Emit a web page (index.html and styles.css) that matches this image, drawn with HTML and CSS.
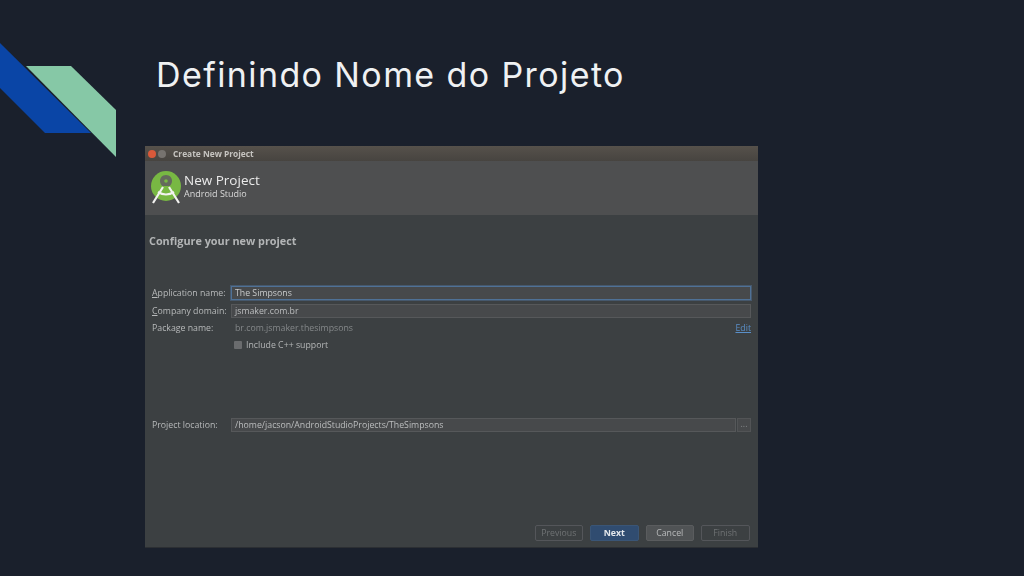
FILE: index.html
```html
<!DOCTYPE html>
<html lang="pt">
<head>
<meta charset="utf-8">
<title>Definindo Nome do Projeto</title>
<link rel="stylesheet" href="styles.css">
</head>
<body>
<main class="slide">
  <svg class="deco" width="120" height="160" viewBox="0 0 120 160" aria-hidden="true">
    <polygon points="0,43 91,133 45,133 0,88" fill="#0a45a6"/>
    <polygon points="26,66 71,66 116,110 116,157" fill="#86c8a6"/>
  </svg>
  <h1 class="title">Definindo Nome do Projeto</h1>
  <section class="dialog">
    <div class="titlebar">
      <span class="dot dot-close"></span>
      <span class="dot dot-min"></span>
      <span class="titlebar-text">Create New Project</span>
    </div>
    <header class="banner">
      <svg class="logo" width="32" height="34" viewBox="0 0 32 34" aria-hidden="true">
        <circle cx="16" cy="15" r="15" fill="#78b843"/>
        <path d="M16 4c-3.800 0-6 2.800-6 6 0 2.200 1 3.800 2.200 5h7.600c1.200-1.200 2.200-2.800 2.200-5C22 6.800 19.800 4 16 4z" fill="#646a5c"/>
        <circle cx="16" cy="10" r="1.800" fill="#78b843"/>
        <path d="M13 16L3 32M19 16L29 32M8 21Q16 26 24 21" stroke="#f2f2f0" stroke-width="2.200" fill="none"/>
      </svg>
      <div class="banner-text">
        <div class="banner-title">New Project</div>
        <div class="banner-sub">Android Studio</div>
      </div>
    </header>
    <div class="content">
      <h2 class="heading">Configure your new project</h2>
      <div class="form">
        <label class="label"><u>A</u>pplication name:</label>
        <div class="input input-focus">The Simpsons</div>
        <label class="label"><u>C</u>ompany domain:</label>
        <div class="input">jsmaker.com.br</div>
        <label class="label">Package name:</label>
        <div class="package"><span class="muted">br.com.jsmaker.thesimpsons</span><a class="edit">Edit</a></div>
        <span></span>
        <div class="check"><span class="box"></span><span>Include C++ support</span></div>
      </div>
      <div class="location">
        <label class="label">Project location:</label>
        <div class="input grow">/home/jacson/AndroidStudioProjects/TheSimpsons</div>
        <div class="browse">...</div>
      </div>
      <div class="buttons">
        <div class="btn btn-off">Previous</div>
        <div class="btn btn-primary">Next</div>
        <div class="btn">Cancel</div>
        <div class="btn btn-off">Finish</div>
      </div>
    </div>
  </section>
</main>
</body>
</html>
```
FILE: styles.css
```css
* { box-sizing: border-box; }
html, body { margin: 0; height: 100%; }
body { background: #1a202c; overflow: hidden; }
.slide {
  position: relative;
  width: 1024px;
  height: 576px;
  padding: 54px 0 0 145px;
  display: flex;
  flex-direction: column;
  font-family: "Open Sans", sans-serif;
}
.deco { position: absolute; left: 0; top: 0; }
.title {
  margin: 0 0 0 11px;
  height: 42px;
  font: 400 34px/42px "Inter", sans-serif;
  letter-spacing: 1.400px;
  color: #eff1f3;
  white-space: nowrap;
}
.dialog {
  margin-top: 50px;
  width: 613px;
  height: 402px;
  display: flex;
  flex-direction: column;
  background: #3c4042;
  border-bottom: 1px solid #2c2f33;
  color: #b4b6b7;
  font-size: 8.750px;
  filter: blur(0.45px);
}
.titlebar {
  height: 15px;
  display: flex;
  align-items: center;
  background: linear-gradient(#56514b, #474440);
  padding-left: 3px;
  gap: 2px;
}
.dot { width: 8px; height: 8px; border-radius: 50%; }
.dot-close { background: #d9593a; }
.dot-min { background: #77736f; }
.titlebar-text {
  margin: -1px 0 0 5px;
  font-weight: 700;
  font-size: 8.400px;
  color: #c6c4c0;
}
.banner {
  height: 54px;
  display: flex;
  align-items: center;
  gap: 2px;
  padding: 0 0 0 5px;
  background: #4e4f50;
}
.banner-text { margin-bottom: 5px; }
.banner-title { font-size: 13.500px; line-height: 16px; color: #eaeaea; }
.banner-sub { font-size: 9px; line-height: 11px; color: #dadada; }
.content {
  flex: 1;
  display: flex;
  flex-direction: column;
  padding: 0 7px;
}
.heading {
  margin: 19px 0 0 -3px;
  height: 14px;
  font-size: 10.850px;
  line-height: 14px;
  font-weight: 700;
  color: #b3b5b6;
}
.form {
  margin-top: 38px;
  display: grid;
  grid-template-columns: 79px 1fr;
  row-gap: 4px;
  align-items: center;
}
.label { white-space: nowrap; color: #b8babb; line-height: 12px; margin-top: -1px; }
.input {
  height: 14px;
  line-height: 12px;
  padding-left: 3px;
  background: #47494b;
  border: 1px solid #56585a;
  color: #bcbebf;
  white-space: nowrap;
}
.input-focus {
  border-color: #4f7196;
  box-shadow: 0 0 0 1px #46586c;
  color: #c8cacb;
}
.package {
  height: 12px;
  display: flex;
  justify-content: space-between;
  align-items: center;
  padding-left: 4px;
}
.muted { color: #85888a; }
.edit { color: #5a8fc8; text-decoration: underline; }
.check {
  height: 13px;
  display: flex;
  align-items: center;
  gap: 4px;
  padding-left: 3px;
}
.box { width: 8px; height: 8px; background: #6a6c6e; border-radius: 1px; }
.location {
  margin-top: 67px;
  display: grid;
  grid-template-columns: 79px 1fr 15px;
  align-items: center;
}
.browse {
  height: 14px;
  margin-left: 1px;
  text-align: center;
  line-height: 10px;
  background: #47494b;
  border: 1px solid #525456;
  color: #85888a;
}
.buttons {
  margin-top: auto;
  margin-bottom: 6px;
  display: flex;
  justify-content: flex-end;
  gap: 7px;
  padding-right: 1.500px;
}
.btn {
  width: 48.500px;
  height: 16px;
  line-height: 14px;
  text-align: center;
  border: 1px solid #5a5c5e;
  border-radius: 2px;
  background: #505355;
  color: #b9bbbc;
}
.btn-off { background: transparent; color: #6f7274; border-color: #54565a; }
.btn-primary {
  background: #304c70;
  border-color: #3a5576;
  color: #e4e8ec;
  font-weight: 700;
}
```
